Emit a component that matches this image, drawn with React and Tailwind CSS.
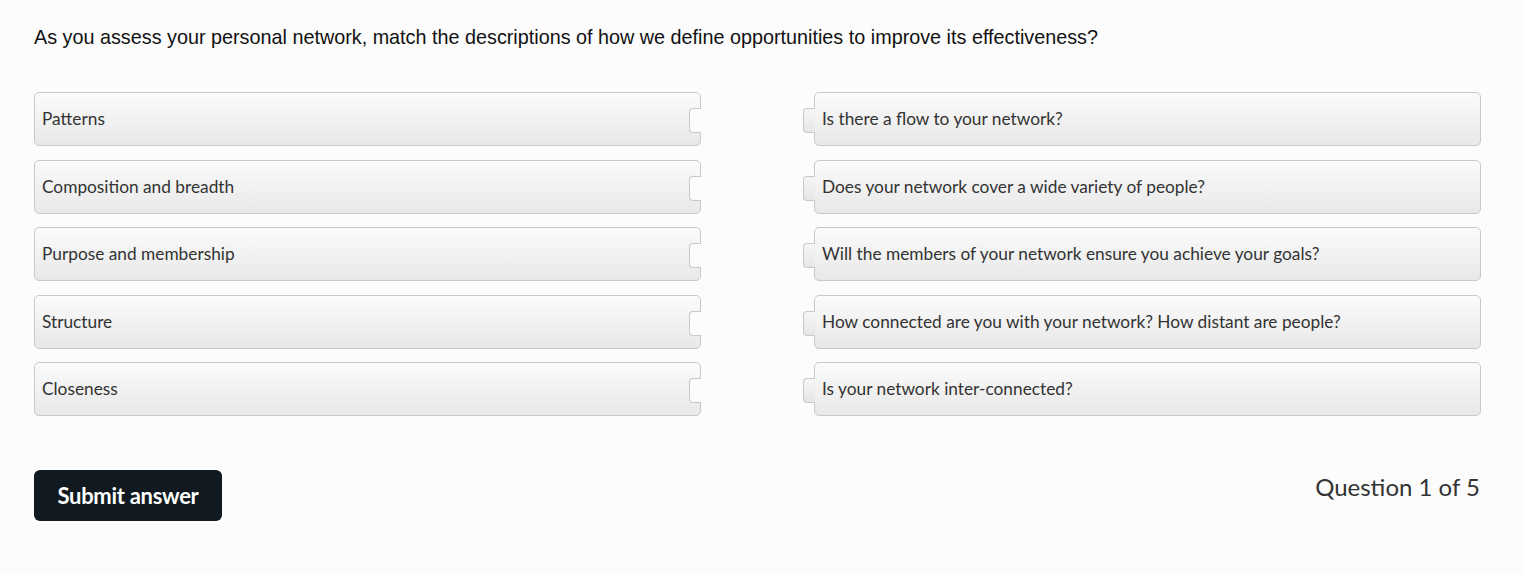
import React from "react";

const left = ["Patterns", "Composition and breadth", "Purpose and membership", "Structure", "Closeness"];
const right = [
  "Is there a flow to your network?",
  "Does your network cover a wide variety of people?",
  "Will the members of your network ensure you achieve your goals?",
  "How connected are you with your network? How distant are people?",
  "Is your network inter-connected?",
];

export default function App() {
  return (
    <div className="min-h-[574px] w-full bg-[#fcfcfc] px-[34px] pt-[25px]" style={{ fontFamily: "Lato, 'Noto Sans', sans-serif" }}>
      <p className="text-[19.8px] leading-[24px] text-[#111]" style={{ fontFamily: "'Liberation Sans', Arial, sans-serif" }}>
        As you assess your personal network, match the descriptions of how we define opportunities to improve its effectiveness?
      </p>
      <div className="mt-[43px] flex">
        <div className="flex w-[667px] flex-col gap-[13.5px]">
          {left.map((t) => (
            <div key={t} className="relative flex h-[54px] items-center rounded-[5px] border border-[#c9c9c9] bg-gradient-to-b from-[#fbfbfb] to-[#e8e8e8] pl-[7px] text-[17.3px] text-[#333]">
              {t}
              <div className="absolute right-[-1px] top-[15px] h-[25px] w-[12px] rounded-l-[4px] border border-r-0 border-[#c9c9c9] bg-[#fcfcfc]" />
            </div>
          ))}
        </div>
        <div className="ml-[113px] flex w-[667px] flex-col gap-[13.5px]">
          {right.map((t) => (
            <div key={t} className="relative flex h-[54px] items-center rounded-[5px] border border-[#c9c9c9] bg-gradient-to-b from-[#fbfbfb] to-[#e8e8e8] pl-[7px] text-[17.3px] text-[#333]">
              <div className="absolute left-[-12px] top-[15px] h-[25px] w-[12px] rounded-l-[4px] border border-r-0 border-[#c9c9c9] bg-gradient-to-b from-[#f6f6f6] to-[#e6e6e6]" />
              {t}
            </div>
          ))}
        </div>
      </div>
      <div className="mt-[54px] flex w-[1446px] items-start justify-between">
        <button className="h-[51px] w-[188px] rounded-[6px] bg-[#111a21] text-[22px] font-bold tracking-[-0.3px] text-white">
          Submit answer
        </button>
        <div className="mt-[1px] text-[24px] leading-[32px] text-[#333]">Question 1 of 5</div>
      </div>
    </div>
  );
}
